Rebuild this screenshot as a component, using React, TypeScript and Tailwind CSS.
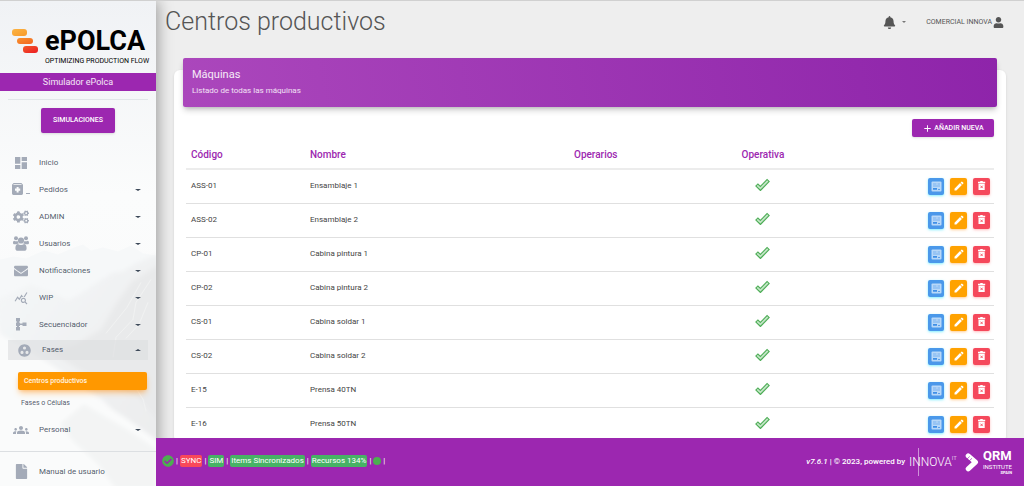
import { useState, type ReactNode } from "react";
import clsx from "clsx";
import { FaBell, FaCheckCircle, FaCogs, FaEnvelope, FaFile, FaUser } from "react-icons/fa";
import { MdAdd, MdDashboard, MdGroupWork, MdGroups, MdModeEdit, MdQueryStats } from "react-icons/md";

type MenuItem = {
  label: string;
  icon: ReactNode;
  children?: string[];
  expandable?: boolean;
};

const machines = [
  { code: "ASS-01", name: "Ensamblaje 1" },
  { code: "ASS-02", name: "Ensamblaje 2" },
  { code: "CP-01", name: "Cabina pintura 1" },
  { code: "CP-02", name: "Cabina pintura 2" },
  { code: "CS-01", name: "Cabina soldar 1" },
  { code: "CS-02", name: "Cabina soldar 2" },
  { code: "E-15", name: "Prensa 40TN" },
  { code: "E-16", name: "Prensa 50TN" },
];

const menu: MenuItem[] = [
  { label: "Inicio", icon: <MdDashboard size={16} /> },
  { label: "Pedidos", icon: <OrdersIcon />, expandable: true },
  { label: "ADMIN", icon: <FaCogs size={16} />, expandable: true },
  { label: "Usuarios", icon: <UsersIcon />, expandable: true },
  { label: "Notificaciones", icon: <FaEnvelope size={14} />, expandable: true },
  { label: "WIP", icon: <MdQueryStats size={14} />, expandable: true },
  { label: "Secuenciador", icon: <SequenceIcon />, expandable: true },
  {
    label: "Fases",
    icon: <MdGroupWork size={15} />,
    expandable: true,
    children: ["Centros productivos", "Fases o Células"],
  },
  { label: "Personal", icon: <MdGroups size={16} />, expandable: true },
];

function OrdersIcon() {
  return (
    <svg width="18" height="13" viewBox="0 0 18 13" fill="currentColor" aria-hidden="true">
      <path
        fillRule="evenodd"
        d="M1.600 0h7.800L11 1.800V10.500a1.400 1.400 0 0 1-1.400 1.400H1.400A1.400 1.400 0 0 1 0 10.500V1.800zM1.500 1.300v.6h8v-.6zM4.600 4v1.600H3v2.200h1.600v1.600h2V7.800h1.600V5.600H6.600V4z"
      />
      <path d="M14 10h4v1h-4z" />
    </svg>
  );
}

function UsersIcon() {
  return (
    <svg width="16" height="15" viewBox="0 0 16 15" fill="currentColor" aria-hidden="true">
      <circle cx="3" cy="2.300" r="2" />
      <circle cx="13" cy="2.300" r="2" />
      <circle cx="8" cy="4.500" r="3.100" />
      <path d="M1.200 4.700c1 .7 2.500.8 3.400.2.200 1 .6 1.800 1.300 2.500-.9 0-1.700.3-2.300.9H1.600C.6 8.300 0 7.900 0 7c0-1 .3-2.300 1.200-2.300zM14.800 4.700c-1 .7-2.500.8-3.400.2-.2 1-.6 1.800-1.300 2.500.9 0 1.700.3 2.300.9h2c1 0 1.600-.4 1.600-1.300 0-1-.3-2.300-1.200-2.300z" />
      <path d="M4.900 7.900c1.800 1.300 4.400 1.300 6.200 0 1.900.2 2.500 2 2.500 4.500 0 1.500-1 2.300-2.300 2.300H4.700c-1.300 0-2.300-.8-2.300-2.300 0-2.500.6-4.300 2.500-4.500z" />
    </svg>
  );
}

function SequenceIcon() {
  return (
    <svg width="12" height="13" viewBox="0 0 12 13" fill="currentColor" aria-hidden="true">
      <path d="M1 0h4v3.600H1zM1 4.500h4v3.600H1zM1 9h4v3.600H1zM7.500 4.500h4v3.600h-4z" />
      <path d="M2 3h2v7H2zM5 5.600h3v1.400H5z" />
    </svg>
  );
}

function OutlineCheck() {
  return (
    <svg width="15" height="13" viewBox="0 0 15 13" fill="none" className="mx-auto" role="img" aria-label="Operativa">
      <path d="M1.500 6.600l3.900 3.900L13.500 2.200" stroke="#4fae58" strokeWidth="4" />
      <path d="M2.200 7.300l3.200 3 7.400-7.400" stroke="#c4e6c7" strokeWidth="1.700" />
    </svg>
  );
}

function DetailIcon() {
  return (
    <svg width="11" height="11" viewBox="0 0 11 11" fill="none" aria-hidden="true">
      <rect x=".5" y=".5" width="10" height="10" rx="1" fill="#b8d8f8" />
      <path d="M2 3h3.500M6.500 3h2.500M2 5h7" stroke="#4a98ea" strokeWidth=".6" />
      <path d="M2 7h4v1.700H2zM7 8h2v.8H7z" fill="#3f8fe6" />
    </svg>
  );
}

function TrashIcon() {
  return (
    <svg width="9" height="10" viewBox="0 0 9 10" aria-hidden="true">
      <path d="M1 .8h2L3.500 0h2L6 .8h2.200v1.400H1zM1.500 2.800h6.200v6.200H1.500z" fill="#fff" />
      <path d="M3.500 4.700l2.200 2.400M5.700 4.700L3.500 7.100" stroke="#f5485b" strokeWidth=".9" />
    </svg>
  );
}

function Mountains() {
  return (
    <svg
      viewBox="0 0 156 486"
      preserveAspectRatio="none"
      className="absolute inset-0 -z-10 h-full w-full"
      aria-hidden="true"
    >
      <defs>
        <linearGradient id="sky" x1="0" y1="0" x2="0" y2="1">
          <stop offset="0" stopColor="#f0f2f5" />
          <stop offset=".4" stopColor="#fbfcfc" />
          <stop offset="1" stopColor="#f8f8f9" />
        </linearGradient>
        <linearGradient id="slope" x1="0" y1="0" x2="1" y2="1">
          <stop offset="0" stopColor="#f5f7f8" />
          <stop offset="1" stopColor="#ebeced" />
        </linearGradient>
        <filter id="soft">
          <feGaussianBlur stdDeviation="2" />
        </filter>
      </defs>
      <path fill="url(#sky)" d="M0 0h156v486H0z" />
      <path
        fill="#f6f8f9"
        d="M0 259l14-3 12 2 18-8 14 4 16-7 9-3 8 6 12-3 15 4 13-6 12 8 13 2v70H0z"
      />
      <g filter="url(#soft)">
        <path
          fill="url(#slope)"
          d="M-5 300l35-16 22 8 16 8 15-8 14-10 16-10 10-1 12-8 26-10v205l-60-60L0 334z"
        />
        <path fill="#e9eaeb" d="M162 262l-30 19-17 24-14 24-26 16-25 6 28 18 40 20 20 8 24 30z" />
        <path fill="#fafbfb" d="M-5 331l43 25 31 20 28 23 35 23 30 22v50H-5z" />
        <path fill="#f3f4f4" d="M84 404l-24 20 14 18 24 22 18 25h40v-40l-30-20z" />
      </g>
      <path
        d="M151 279l-15 23-3 17-17 18-3 20M141 282l-14 25-21 26M132 382l11 17 3 12M148 302l-9 22-13 14"
        stroke="#f1f2f2"
        strokeWidth="1"
        fill="none"
      />
    </svg>
  );
}

function Logo() {
  return (
    <div className="flex items-start gap-[7px] pt-6 pl-3">
      <svg width="26" height="24" viewBox="0 0 26 24" className="mt-1" aria-hidden="true">
        <defs>
          <linearGradient id="amber" x1="0" y1="0" x2="1" y2="1">
            <stop offset="0" stopColor="#fbb445" />
            <stop offset="1" stopColor="#f89a2a" />
          </linearGradient>
          <linearGradient id="orange" x1="0" y1="0" x2="1" y2="1">
            <stop offset="0" stopColor="#f9922c" />
            <stop offset="1" stopColor="#f26522" />
          </linearGradient>
          <linearGradient id="red" x1="0" y1="0" x2="1" y2="1">
            <stop offset="0" stopColor="#f15a29" />
            <stop offset="1" stopColor="#ed1c24" />
          </linearGradient>
        </defs>
        <rect x="0" y="0" width="15" height="7" rx="3" fill="url(#amber)" />
        <rect x="5" y="9" width="16" height="6" rx="3" fill="url(#orange)" />
        <rect x="11" y="17" width="15" height="7" rx="3" fill="url(#red)" />
      </svg>
      <div className="text-black">
        <div className="text-[27px] leading-8 font-bold">ePOLCA</div>
        <div className="text-[7px] leading-2 whitespace-nowrap">OPTIMIZING PRODUCTION FLOW</div>
      </div>
    </div>
  );
}

function Caret({ up }: { up?: boolean }) {
  return (
    <span
      className={clsx(
        "border-x-3 border-x-transparent",
        up ? "border-b-2 border-b-[#3c4858]" : "border-t-2 border-t-[#3c4858]",
      )}
    />
  );
}

function Sidebar() {
  const [open, setOpen] = useState("Fases");

  return (
    <aside className="relative z-10 flex w-[156px] shrink-0 flex-col overflow-hidden">
      <Mountains />
      <Logo />
      <div className="mt-2 bg-[#9c27b0] text-center text-[9px] leading-[18px] text-white/90">Simulador ePolca</div>
      <div className="mx-2 mt-2 border-t border-[#e2e6e9]" />
      <button
        type="button"
        className="mx-auto mt-2 h-[25px] w-[74px] rounded-xs bg-[#9c27b0] text-[7px] font-medium text-white shadow-sm"
      >
        SIMULACIONES
      </button>

      <nav className="mt-4 flex flex-col text-[8px] text-[#3c4858]/90">
        {menu.map((item) => {
          const isOpen = open === item.label;
          return (
            <div key={item.label}>
              <button
                type="button"
                onClick={() => setOpen(isOpen ? "" : item.label)}
                className={clsx(
                  "flex items-center text-left",
                  item.children ? "mx-2 mt-[2px] h-5 w-[140px] px-[7px]" : "h-[27px] w-full pr-[15px] pl-3",
                  isOpen && "bg-[#dcdee0]/60",
                )}
              >
                <span className="mr-[9px] flex w-[18px] shrink-0 justify-center text-[#a4abb8]">{item.icon}</span>
                <span className="flex-1">{item.label}</span>
                {item.expandable && <Caret up={isOpen} />}
              </button>
              {item.children && isOpen && (
                <div className="mt-3 mr-[9px] mb-1 ml-[18px] text-[7px]">
                  <a
                    href="#centros"
                    className="block rounded-xs bg-[#ff9800] px-[6px] leading-[18px] font-medium text-white/90 shadow-md shadow-orange-400/40"
                  >
                    {item.children[0]}
                  </a>
                  <a href="#celulas" className="mt-1 block px-[3px] leading-[18px]">
                    {item.children[1]}
                  </a>
                </div>
              )}
            </div>
          );
        })}
      </nav>

      <div className="mt-2 border-t border-[#dcdfe2] pt-3">
        <a href="#manual" className="flex items-center pl-[13px] text-[8px] text-[#3c4858]/90">
          <span className="mr-[10px] flex w-4 justify-center text-[#a4abb8]">
            <FaFile size={15} />
          </span>
          Manual de usuario
        </a>
      </div>
    </aside>
  );
}

function TopBar() {
  return (
    <header className="flex h-[42px] items-center justify-between pr-5 pl-[9px]">
      <h1 className="text-[25px] font-light text-[#555]">Centros productivos</h1>
      <div className="flex items-center text-[#555]">
        <button type="button" aria-label="Notificaciones" className="flex items-center gap-[6px]">
          <FaBell size={13} />
          <span className="border-x-2 border-t-2 border-x-transparent border-t-[#777]" />
        </button>
        <a href="#perfil" className="ml-5 flex items-center gap-px text-[7px]">
          COMERCIAL INNOVA
          <FaUser size={11} />
        </a>
      </div>
    </header>
  );
}

function MachinesTable() {
  return (
    <table className="w-full table-fixed border-collapse text-left text-[8px] text-[#444]">
      <thead>
        <tr className="h-8 border-b-2 border-[#ececec] text-[10px] text-[#9c27b0]">
          <th className="w-[119px] pt-1 pl-[5px] font-medium">Código</th>
          <th className="w-[264px] pt-1 pl-[5px] font-medium">Nombre</th>
          <th className="w-[17%] pt-1 pl-[5px] font-medium">Operarios</th>
          <th className="w-[14%] pt-1 text-center font-medium">Operativa</th>
          <th aria-label="Acciones" />
        </tr>
      </thead>
      <tbody>
        {machines.map((machine) => (
          <tr key={machine.code} className="h-[34px] border-b border-[#e0e0e0]">
            <td className="pl-[5px]">{machine.code}</td>
            <td className="pl-[5px]">{machine.name}</td>
            <td />
            <td className="pb-1">
              <OutlineCheck />
            </td>
            <td className="pr-1">
              <div className="flex justify-end gap-[6px] text-white">
                <button
                  type="button"
                  aria-label={`Detalle ${machine.code}`}
                  className="flex h-[17px] w-4 items-center justify-center rounded-xs bg-[#4a98ea] shadow-sm shadow-cyan-300/60"
                >
                  <DetailIcon />
                </button>
                <button
                  type="button"
                  aria-label={`Editar ${machine.code}`}
                  className="flex size-[17px] items-center justify-center rounded-xs bg-[#ffa200] shadow-sm shadow-orange-300/60"
                >
                  <MdModeEdit size={12} />
                </button>
                <button
                  type="button"
                  aria-label={`Eliminar ${machine.code}`}
                  className="flex size-[17px] items-center justify-center rounded-xs bg-[#f5485b] shadow-sm shadow-red-300/60"
                >
                  <TrashIcon />
                </button>
              </div>
            </td>
          </tr>
        ))}
      </tbody>
    </table>
  );
}

function Tag({ danger, children }: { danger?: boolean; children: ReactNode }) {
  return (
    <span className={clsx("rounded-xs px-px leading-3", danger ? "bg-[#f9485a]" : "bg-[#47b265]")}>{children}</span>
  );
}

function InnovaLogo() {
  return (
    <div className="relative flex items-start font-light">
      <span className="text-[12px] leading-5">INNOVA</span>
      <span className="text-[6px] leading-3">IT</span>
      <span className="absolute -top-1 left-[9px] h-7 w-px bg-white/50" />
    </div>
  );
}

function QrmLogo() {
  return (
    <div className="flex items-center gap-1">
      <svg width="14" height="19" viewBox="0 0 14 19" aria-hidden="true">
        <path
          d="M3.200 2.800L10.500 9.200 3.200 15.900"
          fill="none"
          stroke="#fff"
          strokeWidth="5"
          strokeLinecap="round"
          strokeLinejoin="round"
        />
        <path d="M3.500 8.500L7 5.300M1.500 6.500l3.200-3" stroke="#9c27b0" strokeWidth=".7" />
      </svg>
      <div className="flex flex-col">
        <span className="text-[13px] leading-[14px] font-bold">QRM</span>
        <span className="text-[6px] leading-[7px]">INSTITUTE</span>
        <span className="text-right text-[4px] leading-[5px] font-bold">SPAIN</span>
      </div>
    </div>
  );
}

function Footer() {
  return (
    <footer className="relative z-10 flex h-12 shrink-0 items-center justify-between bg-[#9c27b0] pr-3 pl-[6px] text-[8px] text-white">
      <div className="flex items-center gap-[2px] pb-[2px]">
        <FaCheckCircle size={12} className="text-[#4caf50]" />
        <span>|</span>
        <Tag danger>SYNC</Tag>
        <span>|</span>
        <Tag>SIM</Tag>
        <span>|</span>
        <Tag>Items Sincronizados</Tag>
        <span>|</span>
        <Tag>Recursos 134%</Tag>
        <span>|</span>
        <span className="size-2 rounded-full bg-[#4caf50]" />
        <span>|</span>
      </div>
      <div className="flex items-center">
        <span className="mr-1 font-medium">
          <em>v7.6.1</em> | © 2023, powered by
        </span>
        <InnovaLogo />
        <div className="ml-2">
          <QrmLogo />
        </div>
      </div>
    </footer>
  );
}

export default function App() {
  return (
    <div className="flex h-screen overflow-hidden border-t border-[#d0d0d0] bg-[#eeeeee] font-[Roboto,sans-serif]">
      <div className="z-10 flex shadow-[2px_0_14px_rgba(0,0,0,0.35)]">
        <Sidebar />
      </div>
      <div className="flex min-w-0 flex-1 flex-col">
        <TopBar />
        <main className="min-h-0 flex-1 overflow-hidden px-[18px] pt-[27px]">
          <section className="rounded-md bg-white shadow-sm">
            <div className="relative -top-3 mx-[9px] -mb-3 rounded-xs bg-linear-[80deg] from-[#ab47bc] to-[#8e24aa] px-[9px] pt-2 pb-[9px] text-white shadow-md shadow-black/20">
              <h2 className="text-[11px] leading-[18px] text-white/90">Máquinas</h2>
              <p className="text-[8px] leading-[14px] text-white/85">Listado de todas las máquinas</p>
            </div>
            <div className="px-3 pt-3">
              <div className="flex justify-end">
                <button
                  type="button"
                  className="flex h-[18px] w-[82px] items-center justify-center gap-px rounded-xs bg-[#9c27b0] text-[7px] font-medium text-white shadow-sm"
                >
                  <MdAdd size={11} />
                  AÑADIR NUEVA
                </button>
              </div>
              <MachinesTable />
            </div>
          </section>
        </main>
        <Footer />
      </div>
    </div>
  );
}
